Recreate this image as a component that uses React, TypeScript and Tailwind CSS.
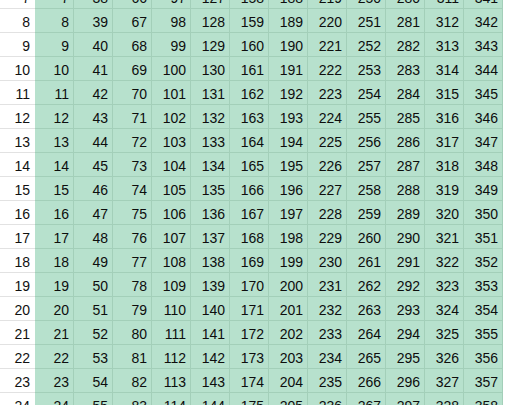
import React from "react";

const offsets = [0, 31, 59, 90, 120, 151, 181, 212, 243, 273, 304, 334];
const rows = Array.from({ length: 18 }, (_, i) => i + 7);

export default function App() {
  return (
    <div
      className="w-[505px] h-[405px] overflow-hidden bg-white"
      style={{ fontFamily: '"Liberation Sans", Arial, sans-serif' }}
    >
      <div className="-mt-[15px] flex flex-col">
        {rows.map((r) => (
          <div key={r} className="flex h-[24px]">
            <div className="w-[35px] shrink-0 h-[24px] border-b border-[#e2e2e2] bg-white text-[14px] text-[#111] flex items-end justify-end pr-[5px] pb-[3px] leading-none">
              {r}
            </div>
            {offsets.map((o, j) => (
              <div
                key={j}
                className="w-[39px] shrink-0 h-[24px] bg-[#b7e1cd] border-r border-b border-[#a3cfb9] text-[14px] text-[#0d0d0d] flex items-end justify-end pr-[4px] pb-[3px] leading-none"
              >
                {r + o}
              </div>
            ))}
          </div>
        ))}
      </div>
    </div>
  );
}
